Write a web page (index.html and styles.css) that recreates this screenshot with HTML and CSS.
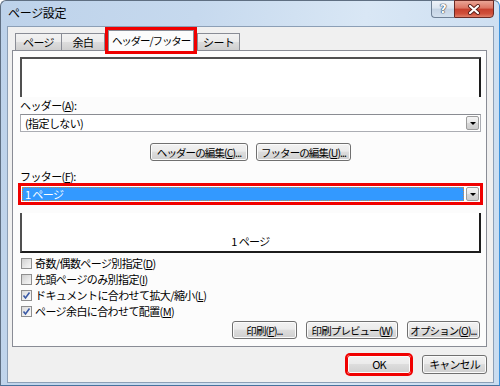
FILE: index.html
```html
<!DOCTYPE html>
<html lang="ja">
<head>
    <meta charset="UTF-8">
    <title>ページ設定</title>
    <link rel="stylesheet" href="styles.css">
</head>
<body>
    <div class="window">
        <div class="titlebar">
            <span class="title">ページ設定</span>
            <div class="caption-buttons">
                <span class="cap-help">?</span>
                <span class="cap-close">
                    <svg width="14" height="11" viewBox="0 0 14 11">
                        <path d="M3 2 L11 9 M11 2 L3 9" stroke="#5a1e18" stroke-width="4" stroke-linecap="round"/>
                        <path d="M3 2 L11 9 M11 2 L3 9" stroke="#fff" stroke-width="2.2" stroke-linecap="round"/>
                    </svg>
                </span>
            </div>
        </div>

        <div class="client">
            <div class="tabs">
                <div class="tab">ページ</div>
                <div class="tab">余白</div>
                <div class="tab active">ヘッダー/フッター</div>
                <div class="tab">シート</div>
            </div>

            <div class="panel">
                <div class="preview preview-header"></div>

                <div class="field-label">ヘッダー(<u>A</u>):</div>
                <div class="combo">
                    <span class="combo-value">(指定しない)</span>
                    <span class="combo-arrow"></span>
                </div>

                <div class="edit-buttons">
                    <button class="btn btn-edit-header">ヘッダーの編集(<u>C</u>)...</button>
                    <button class="btn btn-edit-footer">フッターの編集(<u>U</u>)...</button>
                </div>

                <div class="field-label footer-label">フッター(<u>F</u>):</div>
                <div class="combo combo-selected">
                    <span class="combo-value">1 ページ</span>
                    <span class="combo-arrow"></span>
                </div>

                <div class="preview preview-footer">1 ページ</div>

                <ul class="options">
                    <li class="option"><span class="check"></span>奇数/偶数ページ別指定(<u>D</u>)</li>
                    <li class="option"><span class="check"></span>先頭ページのみ別指定(<u>I</u>)</li>
                    <li class="option"><span class="check checked"><svg width="9" height="9" viewBox="0 0 9 9"><path d="M1.5 4.5 L3.5 7 L7.5 1.5" fill="none" stroke="#3b5aa6" stroke-width="1.6"/></svg></span>ドキュメントに合わせて拡大/縮小(<u>L</u>)</li>
                    <li class="option"><span class="check checked"><svg width="9" height="9" viewBox="0 0 9 9"><path d="M1.5 4.5 L3.5 7 L7.5 1.5" fill="none" stroke="#3b5aa6" stroke-width="1.6"/></svg></span>ページ余白に合わせて配置(<u>M</u>)</li>
                </ul>

                <div class="print-buttons">
                    <button class="btn btn-print">印刷(<u>P</u>)...</button>
                    <button class="btn btn-preview">印刷プレビュー(<u>W</u>)</button>
                    <button class="btn btn-options">オプション(<u>O</u>)...</button>
                </div>
            </div>

            <div class="dialog-buttons">
                <button class="btn btn-ok">OK</button>
                <button class="btn btn-cancel">キャンセル</button>
            </div>
        </div>
    </div>
</body>
</html>
```

FILE: styles.css
```css
body {
    margin: 0;
    font-family: "Noto Sans CJK JP", "Noto Sans", sans-serif;
    font-size: 11px;
    letter-spacing: -0.6px;
    color: #000;
}

.window {
    width: 500px;
    height: 386px;
    box-sizing: border-box;
    display: flex;
    flex-direction: column;
    padding: 0 5px 2px 6px;
    border: 1px solid #5f6f82;
    border-right-color: #3d92dc;
    border-bottom-color: #47729c;
    border-radius: 6px 6px 0 0;
    background: linear-gradient(100deg, #bdd2ea 0%, #c6d9ee 35%, #d9e7f5 65%, #c9dcf0 100%);
}

/* タイトルバー */
.titlebar {
    height: 25px;
    display: flex;
    align-items: flex-start;
}

.title {
    padding: 4px 0 0 1px;
    font-size: 12px;
    line-height: 16px;
    letter-spacing: -0.3px;
    color: #000;
}

.caption-buttons {
    margin-left: auto;
    display: flex;
    margin-top: -1px;
}

.cap-help,
.cap-close {
    height: 18px;
    box-sizing: border-box;
    display: flex;
    align-items: center;
    justify-content: center;
}

.cap-help {
    width: 23px;
    border: 1px solid #6f8196;
    border-right: none;
    border-radius: 0 0 0 4px;
    background: linear-gradient(#eef3f9 0%, #dbe5f0 45%, #c4d3e4 50%, #d3e0ee 100%);
    color: #fff;
    font-family: "DejaVu Sans", sans-serif;
    font-weight: bold;
    font-size: 12px;
    text-shadow: 0 0 1px #2b3a4e, 0 0 1px #2b3a4e, 0 0 1px #2b3a4e;
}

.cap-close {
    width: 40px;
    border: 1px solid #6b2a24;
    border-radius: 0 0 4px 0;
    background: linear-gradient(#eaa596 0%, #dc7462 45%, #c63f2d 50%, #d0503b 80%, #e0806a 100%);
}

/* クライアント領域 */
.client {
    flex: 1;
    display: flex;
    flex-direction: column;
    background: #f0f0f0;
    border: 1px solid #8c9fb6;
    padding: 0 6px 0 4px;
}

.tabs {
    height: 23px;
    display: flex;
    align-items: flex-end;
    padding-left: 3px;
}

.tab {
    height: 17px;
    min-width: 44px;
    box-sizing: border-box;
    padding: 0 5px;
    margin-left: -1px;
    border: 1px solid #898c95;
    border-bottom: none;
    background: linear-gradient(#f2f2f2 0%, #ebebeb 50%, #dddddd 51%, #cfcfcf 100%);
    text-align: center;
    line-height: 16px;
    white-space: nowrap;
}

.tab:first-child {
    margin-left: 0;
    width: 47px;
}

.tab.active {
    position: relative;
    z-index: 1;
    width: 86px;
    height: 21px;
    margin: 0 3px -1px 3px;
    padding: 2px 0 0;
    font-size: 10.5px;
    letter-spacing: -1.1px;
    background: #fcfcfc;
    outline: 3px solid #f00000;
}

.tab.active + .tab {
    margin-left: 0;
    min-width: 41px;
}

.panel {
    display: flex;
    flex-direction: column;
    border: 1px solid #898c95;
    background: #fcfcfc;
    padding: 6px 5px 7px 7px;
}

.preview {
    height: 40px;
    box-sizing: border-box;
    background: #fff;
}

.preview-header {
    border-top: 2px solid #505050;
    border-left: 2px solid #505050;
    border-right: 2px solid #1c1c1c;
}

.preview-footer {
    margin-top: 10px;
    border-left: 2px solid #505050;
    border-bottom: 2px solid #1c1c1c;
    border-right: 2px solid #1c1c1c;
    text-align: center;
    padding-top: 21px;
    line-height: 14px;
}

.field-label {
    margin-top: 1px;
    line-height: 14px;
}

.footer-label {
    margin-top: 8px;
}

.combo {
    margin-top: 2px;
    height: 18px;
    box-sizing: border-box;
    display: flex;
    align-items: center;
    padding: 0 1px 0 1px;
    border: 1px solid #abadb3;
    border-top-color: #8a8c92;
    background: #fff;
}

.combo-value {
    flex: 1;
    height: 14px;
    line-height: 14px;
    padding-left: 3px;
}

.combo-arrow {
    width: 13px;
    height: 14px;
    box-sizing: border-box;
    margin-left: 2px;
    border: 1px solid #9c9c9c;
    border-radius: 2px;
    background: linear-gradient(#f4f4f4 0%, #e8e8e8 50%, #d8d8d8 51%, #cdcdcd 100%);
    position: relative;
}

.combo-arrow::after {
    content: "";
    position: absolute;
    left: 3px;
    top: 5px;
    border-left: 3px solid transparent;
    border-right: 3px solid transparent;
    border-top: 3px solid #000;
}

.combo-selected {
    outline: 3px solid #f00000;
    outline-offset: -1px;
}

.combo-selected .combo-value {
    background: #3399ff;
    color: #fff;
    outline: 1px dotted #c8884a;
    outline-offset: -1px;
}

/* ボタン */
.btn {
    height: 18px;
    box-sizing: border-box;
    padding: 0;
    border: 1px solid #707070;
    border-radius: 3px;
    background: linear-gradient(#f2f2f2 0%, #ebebeb 45%, #dddddd 50%, #cfcfcf 100%);
    box-shadow: inset 0 0 0 1px #fbfbfb;
    font-family: inherit;
    font-size: 10.5px;
    letter-spacing: -0.9px;
    line-height: 15px;
    white-space: nowrap;
    color: #000;
    cursor: pointer;
}

.edit-buttons {
    margin-top: 11px;
    display: flex;
    justify-content: center;
    gap: 8px;
}

.btn-edit-header { width: 98px; }
.btn-edit-footer { width: 95px; }

.options {
    list-style: none;
    margin: 2px 0 0;
    padding: 0;
}

.option {
    height: 16px;
    display: flex;
    align-items: center;
}

.check {
    width: 11px;
    height: 11px;
    box-sizing: border-box;
    margin: 0 3px 0 1px;
    border: 1px solid #8f8f8f;
    background: linear-gradient(135deg, #cfcfcf 0%, #e8e8e8 60%, #f6f6f6 100%);
    display: flex;
    align-items: center;
    justify-content: center;
}

.check.checked {
    background: linear-gradient(135deg, #dadada 0%, #f0f0f0 60%, #fafafa 100%);
}

.print-buttons {
    margin-top: 2px;
    display: flex;
    justify-content: flex-end;
    gap: 9px;
    padding-right: 1px;
}

.btn-print { width: 65px; }
.btn-preview { width: 92px; }
.btn-options { width: 73px; }

.dialog-buttons {
    margin-top: 8px;
    display: flex;
    justify-content: flex-end;
    gap: 11px;
}

.btn-ok,
.btn-cancel {
    height: 19px;
    width: 65px;
    font-size: 11px;
}

.btn-ok {
    width: 64px;
    border-color: #f00000;
    box-shadow: 0 0 0 2px #f00000, inset 0 0 0 1px #fbfbfb;
}
```
